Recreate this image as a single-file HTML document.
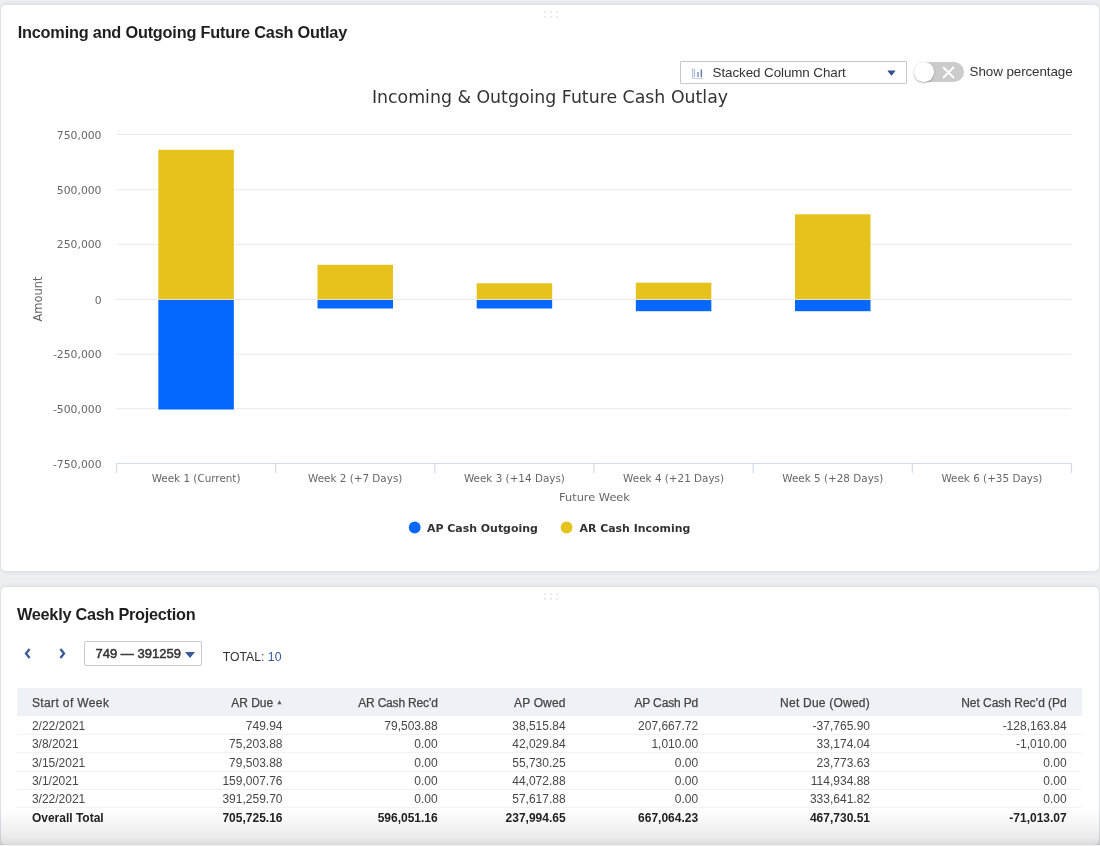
<!DOCTYPE html>
<html lang="en">
<head>
<meta charset="utf-8">
<title>Cash Outlay Dashboard</title>
<style>
html,body{margin:0;padding:0;}
body{width:1100px;height:846px;overflow:hidden;background:#eceff2;position:relative;
  font-family:"Liberation Sans",sans-serif;color:#333;}
.panel{position:absolute;left:1.2px;width:1097.4px;background:#fff;border-radius:5px;
  box-shadow:0 0 4px rgba(40,50,70,.17);}
#p1{top:5px;height:566px;}
#p2{top:587px;height:257.7px;}
.grip{position:absolute;left:543px;top:6px;width:14px;height:7px;}
.grip i{position:absolute;width:2px;height:2px;background:#ebebeb;}
.ptitle{position:absolute;left:16.5px;font-weight:bold;font-size:16.3px;letter-spacing:-0.2px;color:#1f1f1f;white-space:nowrap;line-height:20px;}
.abs{position:absolute;white-space:nowrap;}
#page{position:absolute;left:0;top:0;width:1100px;height:846px;filter:blur(0.55px);}
/* dropdown */
#dd{position:absolute;left:678.4px;top:56.2px;width:225.4px;height:20.6px;border:1px solid #c6c8cc;background:#fff;border-radius:1px;}
#dd span{position:absolute;left:32px;top:-0.6px;line-height:21px;font-size:13.4px;letter-spacing:-0.08px;color:#333;}
#toggle{position:absolute;left:913px;top:57px;width:49.4px;height:19.5px;border-radius:10px;background:#cbcbcb;}
#knob{position:absolute;left:0;top:0;width:19.5px;height:19.5px;border-radius:50%;background:#fff;box-shadow:0 1px 2px rgba(0,0,0,.3);}
#showp{position:absolute;left:968.4px;top:57px;line-height:19px;font-size:13.4px;letter-spacing:-0.08px;color:#333;}
#sel{position:absolute;left:83.2px;top:54.2px;width:115.6px;height:23.2px;border:1px solid #c6c9cf;border-radius:2px;background:#fff;}
#sel span{position:absolute;left:10.2px;top:0;line-height:23.4px;font-size:13px;font-weight:normal;color:#333;-webkit-text-stroke:0.5px #333;}
#total{left:221.5px;top:62px;font-size:12.25px;line-height:16px;color:#333;}
#total b{font-weight:normal;color:#33589c;}
.sort{font-size:6px;position:relative;top:-3px;color:#555;}
/* table */
#tbl{position:absolute;left:16px;width:1065px;height:140px;font-size:12px;color:#474747;}
#tbl .hr{position:absolute;left:0;top:0;width:1065px;background:#eef1f5;line-height:28px;color:#444;-webkit-text-stroke:0.25px #444;}
#tbl .tr{position:absolute;left:0;width:1065px;box-sizing:border-box;border-bottom:1px solid #f0f2f6;line-height:18px;}
#tbl .c{position:absolute;top:0.5px;white-space:nowrap;}
#tbl .tot{font-weight:bold;border-bottom:none;color:#222;}
#fade{position:absolute;left:0;top:808px;width:1100px;height:37px;
  background:linear-gradient(to bottom,rgba(0,0,0,0) 0%,rgba(0,0,0,.027) 32%,rgba(0,0,0,.055) 59%,rgba(0,0,0,.085) 81%,rgba(0,0,0,.13) 96%,rgba(0,0,0,.16) 100%);pointer-events:none;}
#foot{position:absolute;left:0;top:844.8px;width:1100px;height:2px;background:#f4f4f4;}
</style>
</head>
<body>
<div id="page">

<div class="panel" id="p1">
  <div class="grip"><i style="left:0;top:0"></i><i style="left:6px;top:0"></i><i style="left:12px;top:0"></i><i style="left:0;top:5px"></i><i style="left:6px;top:5px"></i><i style="left:12px;top:5px"></i></div>
  <div class="ptitle" style="top:17px">Incoming and Outgoing Future Cash Outlay</div>

  <div id="dd">
    <svg class="abs" style="left:10px;top:5px" width="13" height="13" viewBox="0 0 13 13"><path d="M1.5 1v10.3h10" stroke="#b7c4de" stroke-width="1" fill="none"/><path d="M3.4 10V2" stroke="#a9b9d8" stroke-width="1.3" fill="none"/><path d="M7 10V5" stroke="#6c84b8" stroke-width="1.3" fill="none"/><path d="M10.3 10V2.4" stroke="#5872ae" stroke-width="1.3" fill="none"/></svg>
    <span>Stacked Column Chart</span>
    <svg class="abs" style="left:206px;top:8px" width="9" height="6" viewBox="0 0 9 6"><path d="M1 0.6h7q.7 0 .2.6L5 5.2q-.5.5-1 0L0.8 1.2q-.5-.6.2-.6z" fill="#34528f"/></svg>
  </div>
  <div id="toggle"><div id="knob"></div>
    <svg class="abs" style="left:27.7px;top:4.2px" width="13" height="13" viewBox="0 0 13 13"><path d="M1 1l11 11M12 1l-11 11" stroke="#fff" stroke-width="2" fill="none"/></svg>
  </div>
  <div id="showp">Show percentage</div>

  <svg class="abs" id="chart" style="left:-0.2px;top:0" width="1098" height="566" viewBox="1 5 1098 566" font-family="'DejaVu Sans','Liberation Sans',sans-serif">
    <path d="M116.5 134.5H1071.5" stroke="#e9e9e9" stroke-width="1"/>
    <path d="M116.5 189.8H1071.5" stroke="#e9e9e9" stroke-width="1"/>
    <path d="M116.5 244.3H1071.5" stroke="#e9e9e9" stroke-width="1"/>
    <path d="M116.5 299.5H1071.5" stroke="#e9e9e9" stroke-width="1"/>
    <path d="M116.5 354.2H1071.5" stroke="#e9e9e9" stroke-width="1"/>
    <path d="M116.5 408.8H1071.5" stroke="#e9e9e9" stroke-width="1"/>
    <rect x="158.33" y="149.8" width="75.5" height="149.40" fill="#e6c21c"/>
    <rect x="158.33" y="300.0" width="75.5" height="109.50" fill="#0467fe"/>
    <rect x="317.50" y="264.8" width="75.5" height="34.40" fill="#e6c21c"/>
    <rect x="317.50" y="300.0" width="75.5" height="8.50" fill="#0467fe"/>
    <rect x="476.67" y="283.3" width="75.5" height="15.90" fill="#e6c21c"/>
    <rect x="476.67" y="300.0" width="75.5" height="8.50" fill="#0467fe"/>
    <rect x="635.83" y="282.7" width="75.5" height="16.50" fill="#e6c21c"/>
    <rect x="635.83" y="300.0" width="75.5" height="11.20" fill="#0467fe"/>
    <rect x="795.00" y="214.3" width="75.5" height="84.90" fill="#e6c21c"/>
    <rect x="795.00" y="300.0" width="75.5" height="11.20" fill="#0467fe"/>
    <path d="M116.5 463.5H1072.0" stroke="#d3dbed" stroke-width="1.2" fill="none"/>
    <path d="M116.50 463.5V473.0" stroke="#d3dbed" stroke-width="1.2"/>
    <path d="M275.67 463.5V473.0" stroke="#d3dbed" stroke-width="1.2"/>
    <path d="M434.83 463.5V473.0" stroke="#d3dbed" stroke-width="1.2"/>
    <path d="M594.00 463.5V473.0" stroke="#d3dbed" stroke-width="1.2"/>
    <path d="M753.17 463.5V473.0" stroke="#d3dbed" stroke-width="1.2"/>
    <path d="M912.33 463.5V473.0" stroke="#d3dbed" stroke-width="1.2"/>
    <path d="M1071.50 463.5V473.0" stroke="#d3dbed" stroke-width="1.2"/>
    <text x="101.5" y="138.5" text-anchor="end" font-size="10.8" fill="#666">750,000</text>
    <text x="101.5" y="193.8" text-anchor="end" font-size="10.8" fill="#666">500,000</text>
    <text x="101.5" y="248.3" text-anchor="end" font-size="10.8" fill="#666">250,000</text>
    <text x="101.5" y="303.5" text-anchor="end" font-size="10.8" fill="#666">0</text>
    <text x="101.5" y="358.2" text-anchor="end" font-size="10.8" fill="#666">-250,000</text>
    <text x="101.5" y="412.8" text-anchor="end" font-size="10.8" fill="#666">-500,000</text>
    <text x="101.5" y="467.6" text-anchor="end" font-size="10.8" fill="#666">-750,000</text>
    <text x="196.1" y="482" text-anchor="middle" font-size="10.4" fill="#666">Week 1 (Current)</text>
    <text x="355.2" y="482" text-anchor="middle" font-size="10.4" fill="#666">Week 2 (+7 Days)</text>
    <text x="514.4" y="482" text-anchor="middle" font-size="10.4" fill="#666">Week 3 (+14 Days)</text>
    <text x="673.6" y="482" text-anchor="middle" font-size="10.4" fill="#666">Week 4 (+21 Days)</text>
    <text x="832.8" y="482" text-anchor="middle" font-size="10.4" fill="#666">Week 5 (+28 Days)</text>
    <text x="991.9" y="482" text-anchor="middle" font-size="10.4" fill="#666">Week 6 (+35 Days)</text>
    <text x="594.5" y="500.7" text-anchor="middle" font-size="11.35" fill="#666">Future Week</text>
    <text transform="translate(41.5 299) rotate(-90)" text-anchor="middle" font-size="11.45" fill="#666">Amount</text>
    <text x="550" y="103.4" text-anchor="middle" font-size="17.35" fill="#333">Incoming &amp; Outgoing Future Cash Outlay</text>
    <circle cx="414.7" cy="527.5" r="5.9" fill="#0467fe"/>
    <text x="427" y="532" font-size="10.95" font-weight="bold" fill="#333">AP Cash Outgoing</text>
    <circle cx="566.6" cy="527.5" r="5.9" fill="#e6c21c"/>
    <text x="579.5" y="532" font-size="10.95" font-weight="bold" fill="#333">AR Cash Incoming</text>
  </svg>
</div>

<div class="panel" id="p2">
  <div class="grip"><i style="left:0;top:0"></i><i style="left:6px;top:0"></i><i style="left:12px;top:0"></i><i style="left:0;top:5px"></i><i style="left:6px;top:5px"></i><i style="left:12px;top:5px"></i></div>
  <div class="ptitle" style="top:17px;left:15.8px;letter-spacing:-0.27px">Weekly Cash Projection</div>
  <svg class="abs" style="left:22px;top:60px" width="9" height="13" viewBox="0 0 9 13"><path d="M6.6 2L3 6.5L6.6 11" stroke="#3c5a99" stroke-width="2.3" fill="none"/></svg>
  <svg class="abs" style="left:57px;top:60px" width="9" height="13" viewBox="0 0 9 13"><path d="M2.4 2L6 6.5L2.4 11" stroke="#3c5a99" stroke-width="2.3" fill="none"/></svg>
  <div id="sel"><span>749 — 391259</span>
    <svg class="abs" style="left:100px;top:10px" width="10" height="6" viewBox="0 0 10 6"><path d="M0 0h10L5 6z" fill="#3c5a99"/></svg>
  </div>
  <div class="abs" id="total">TOTAL: <b>10</b></div>
  <div id="tbl" style="top:101.3px">
    <div class="hr" style="height:28.2px"><span class="c l" style="left:14.7px"><span style="letter-spacing:0.38px">Start of Week</span></span><span class="c r" style="right:799.7px"><span style="letter-spacing:0.0px">AR Due <span class="sort">▲</span></span></span><span class="c r" style="right:644.5px"><span style="letter-spacing:-0.2px">AR Cash Rec’d</span></span><span class="c r" style="right:516.6px"><span style="letter-spacing:0.15px">AP Owed</span></span><span class="c r" style="right:384.1px"><span style="letter-spacing:-0.15px">AP Cash Pd</span></span><span class="c r" style="right:212.2px"><span style="letter-spacing:0.23px">Net Due (Owed)</span></span><span class="c r" style="right:15.5px"><span style="letter-spacing:-0.03px">Net Cash Rec’d (Pd</span></span></div>
    <div class="tr" style="top:28.20px;height:18.37px"><span class="c l" style="left:14.7px">2/22/2021</span><span class="c r" style="right:799.7px">749.94</span><span class="c r" style="right:644.5px">79,503.88</span><span class="c r" style="right:516.6px">38,515.84</span><span class="c r" style="right:384.1px">207,667.72</span><span class="c r" style="right:212.2px">-37,765.90</span><span class="c r" style="right:15.5px">-128,163.84</span></div>
    <div class="tr" style="top:46.57px;height:18.37px"><span class="c l" style="left:14.7px">3/8/2021</span><span class="c r" style="right:799.7px">75,203.88</span><span class="c r" style="right:644.5px">0.00</span><span class="c r" style="right:516.6px">42,029.84</span><span class="c r" style="right:384.1px">1,010.00</span><span class="c r" style="right:212.2px">33,174.04</span><span class="c r" style="right:15.5px">-1,010.00</span></div>
    <div class="tr" style="top:64.94px;height:18.37px"><span class="c l" style="left:14.7px">3/15/2021</span><span class="c r" style="right:799.7px">79,503.88</span><span class="c r" style="right:644.5px">0.00</span><span class="c r" style="right:516.6px">55,730.25</span><span class="c r" style="right:384.1px">0.00</span><span class="c r" style="right:212.2px">23,773.63</span><span class="c r" style="right:15.5px">0.00</span></div>
    <div class="tr" style="top:83.31px;height:18.37px"><span class="c l" style="left:14.7px">3/1/2021</span><span class="c r" style="right:799.7px">159,007.76</span><span class="c r" style="right:644.5px">0.00</span><span class="c r" style="right:516.6px">44,072.88</span><span class="c r" style="right:384.1px">0.00</span><span class="c r" style="right:212.2px">114,934.88</span><span class="c r" style="right:15.5px">0.00</span></div>
    <div class="tr" style="top:101.68px;height:18.37px"><span class="c l" style="left:14.7px">3/22/2021</span><span class="c r" style="right:799.7px">391,259.70</span><span class="c r" style="right:644.5px">0.00</span><span class="c r" style="right:516.6px">57,617.88</span><span class="c r" style="right:384.1px">0.00</span><span class="c r" style="right:212.2px">333,641.82</span><span class="c r" style="right:15.5px">0.00</span></div>
    <div class="tr tot" style="top:120.05px;height:18.37px"><span class="c l" style="left:14.7px">Overall Total</span><span class="c r" style="right:799.7px">705,725.16</span><span class="c r" style="right:644.5px">596,051.16</span><span class="c r" style="right:516.6px">237,994.65</span><span class="c r" style="right:384.1px">667,064.23</span><span class="c r" style="right:212.2px">467,730.51</span><span class="c r" style="right:15.5px">-71,013.07</span></div>
  </div>
</div>

<div id="fade"></div>
<div id="foot"></div>
</div>
</body>
</html>
